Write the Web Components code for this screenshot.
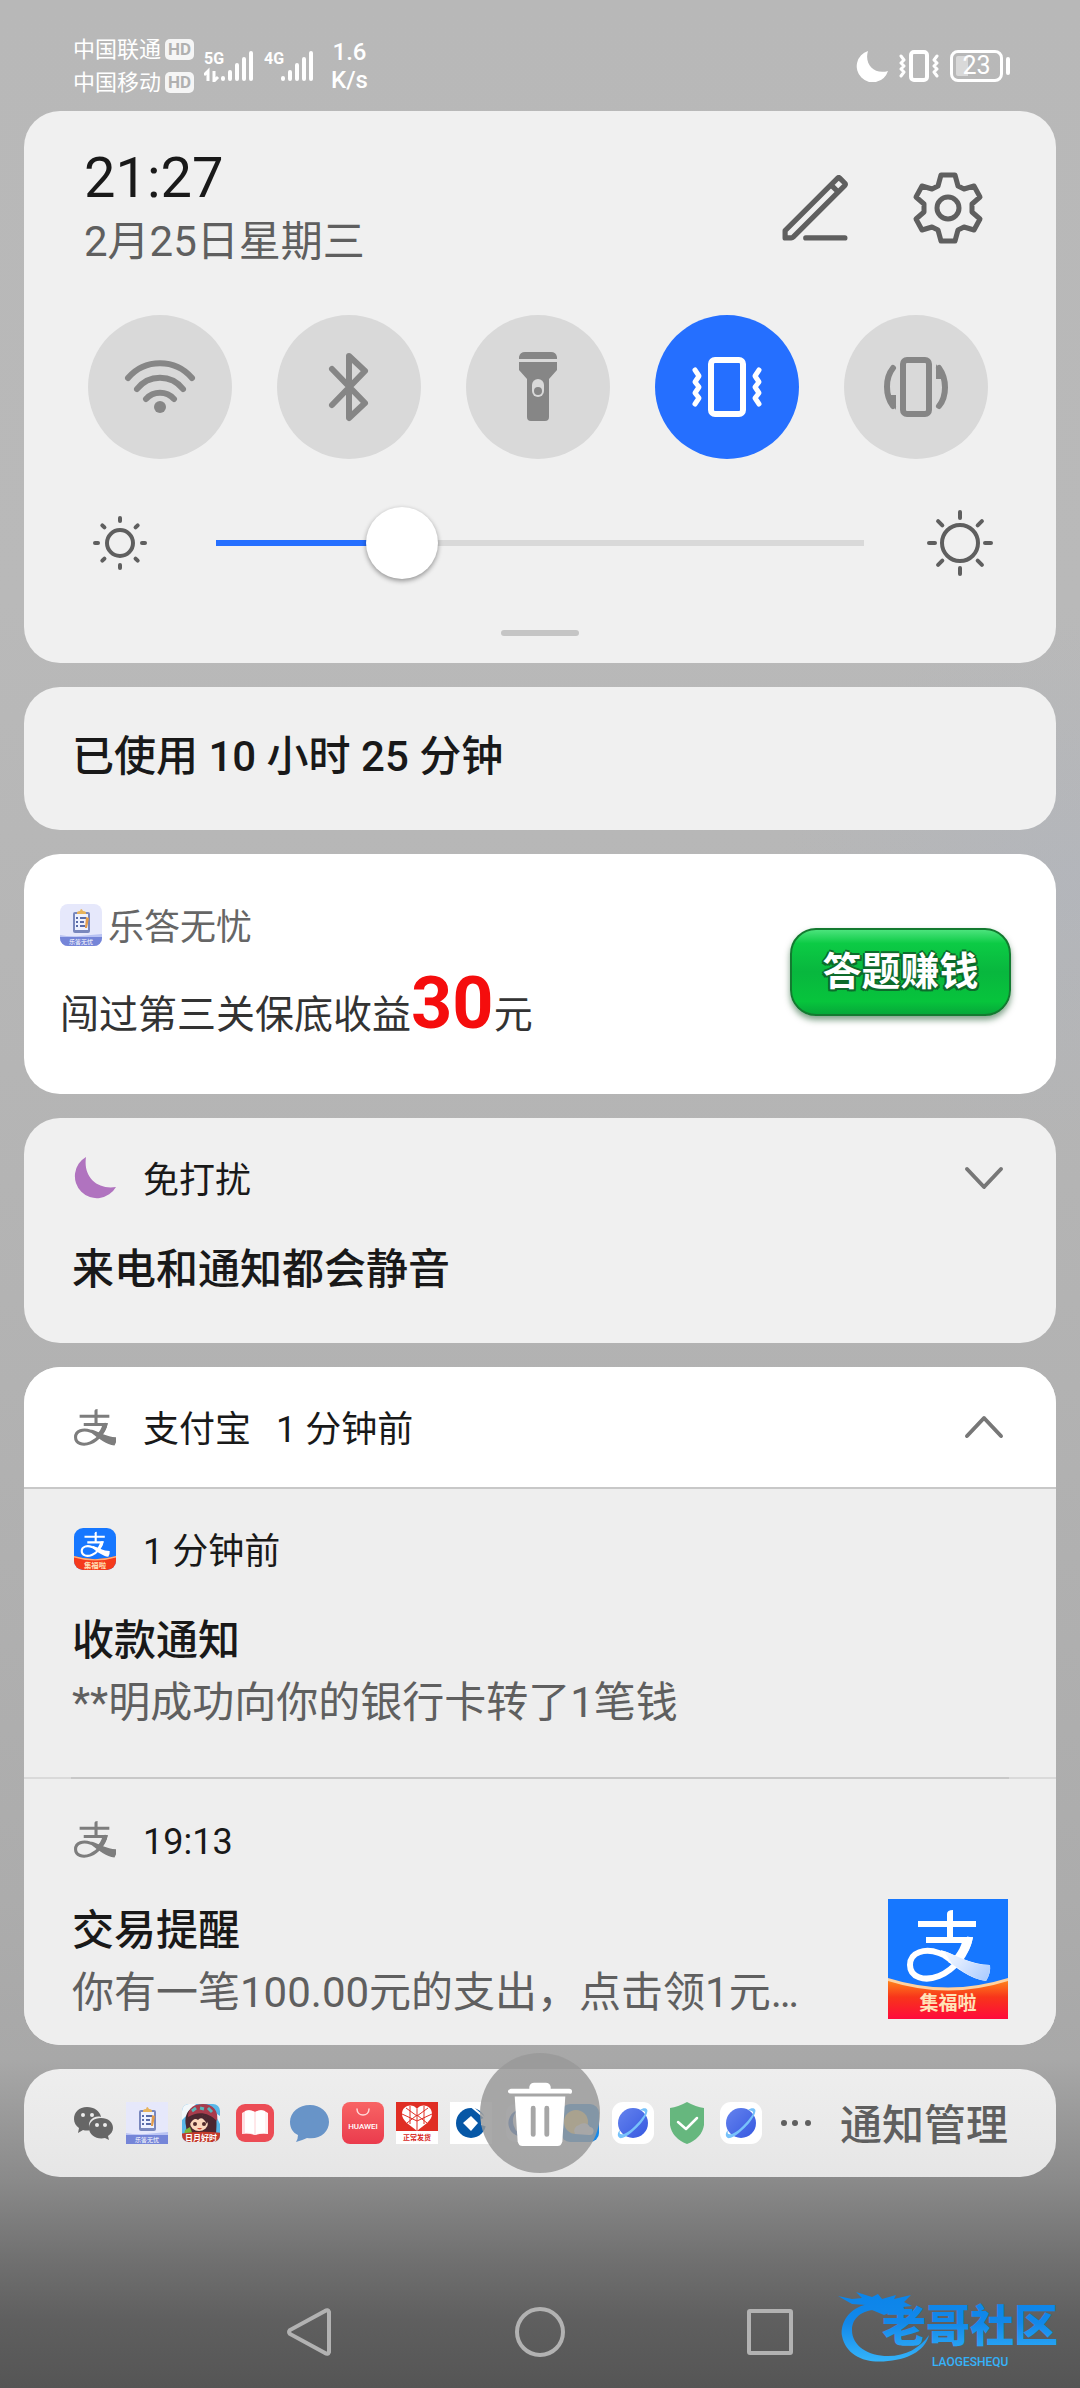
<!DOCTYPE html>
<html lang="zh-CN">
<head>
<meta charset="utf-8">
<meta name="viewport" content="width=device-width, initial-scale=1">
<title>通知中心</title>
<style>
  body {
    margin: 0;
    min-height: 100vh;
    font-family: Roboto, "Noto Sans CJK SC", sans-serif;
    color: #191919;
    background:
      radial-gradient(ellipse 300px 260px at 100% 880px, rgba(172, 180, 196, .3), transparent),
      linear-gradient(#b8b8b8 0, #b9b9b9 600px, #b3b3b3 1300px, #acacac 1900px, #a8a8a8 2060px, #8a8a8a 2180px, #707070 2260px, #5f5f5f 2320px, #555 2388px);
  }
</style>
</head>
<body>
<notice-shade>
  <status-bar slot="status"></status-bar>
  <control-panel></control-panel>

  <notice-card>
    <notice-title class="solo">已使用 10 小时 25 分钟</notice-title>
  </notice-card>

  <promo-card name="乐答无忧" action="答题赚钱">闯过第三关保底收益<b slot="amount">30</b><span slot="unit">元</span></promo-card>

  <notice-card>
    <notice-item icon="moon" name="免打扰" toggle="down" heading="来电和通知都会静音"></notice-item>
  </notice-card>

  <notice-card>
    <notice-head slot="head" icon="alipay" name="支付宝" time="1 分钟前" toggle="up"></notice-head>
    <notice-item icon="alipayApp" name="1 分钟前" heading="收款通知" body="**明成功向你的银行卡转了1笔钱"></notice-item>
    <notice-item class="next" icon="alipay" name="19:13" heading="交易提醒" body="你有一笔100.00元的支出，点击领1元…" picture="alipayBig"></notice-item>
  </notice-card>

  <notice-tray></notice-tray>
  <nav-bar slot="nav"></nav-bar>
</notice-shade>

<script>
// the ribbon mark, drawn in a 120 unit square
const alipayMark = (fill) => `
  <g fill="none" stroke="${fill}" stroke-linejoin="round">
    <path d="M30 25H88M38 41H80" stroke-width="6"/>
    <path d="M59 41V15q0-4 6-4V41" fill="${fill}" stroke="none"/>
    <path d="M82 38C79 55 66 71 51 77C36 83 22 78 22 66C22 53 37 49 51 54C65 59 80 70 100 71" stroke-width="6"/>
  </g>
  <path d="M85 38L75 39C73 49 68 57 60 63L67 67C77 59 83 50 85 38Z" fill="${fill}"/>
  <path d="M53 51C69 56 83 66 102 66Q103 74 98 82C82 80 69 69 55 59Z" fill="${fill}"/>`;

const waves = '<polyline points="-32,-17 -28,-11 -32,-5 -28,0 -32,6 -28,11 -32,17"/><polyline points="32,-17 28,-11 32,-5 28,0 32,6 28,11 32,17"/>';

const rays = (a, b) => [0, 45, 90, 135, 180, 225, 270, 315]
  .map(deg => `<path d="M0 ${a}V${b}" transform="rotate(${deg})"/>`).join('');

const browserArt = `
  <defs><linearGradient id="b" x2="1" y2="1"><stop stop-color="#6583ee"/><stop offset="1" stop-color="#3558e0"/></linearGradient></defs>
  <rect width="42" height="42" rx="11" fill="#fff"/>
  <circle cx="21" cy="21" r="15" fill="url(#b)"/>
  <path d="M8 28C4 32 6 37 10 36C18 34 33 19 35 11C37 6 32 5 28 8C35 9 34 11 30 16C24 24 17 30 12 32C8 33 7 32 8 28Z" fill="#78c2fa"/>`;

const clipboardArt = (radius) => `
  <defs><clipPath id="c"><rect width="42" height="42" rx="${radius}"/></clipPath></defs>
  <g clip-path="url(#c)">
    <rect width="42" height="42" fill="#e6e8fb"/>
    <path d="M0 31Q10 33 20 32T42 30V42H0Z" fill="#b9c3f3"/>
    <rect y="33" width="42" height="9" fill="#7585d8"/>
    <rect x="13" y="8" width="17" height="21" rx="2" fill="#7987bd"/>
    <rect x="15" y="10" width="13" height="16" fill="#eef1ff"/>
    <path d="M17 9q0-2 3-2q1-4 3 0q3 0 3 2v1h-9z" fill="#e7b35c"/>
    <path d="M16 14h2m2 0h6M16 18h2m2 0h4M16 22h2m2 0h5" stroke="#596ba8" stroke-width="2"/>
    <path d="M25 24L26 13l3 1-2 10z" fill="#e29b4b"/>
    <text x="21" y="40" font-size="6" fill="#fff" text-anchor="middle">乐答无忧</text>
  </g>`;

// name: [viewBox, markup]
const ART = {
  pencil: ['0 0 64 64', `<g fill="none" stroke="#5f5f5f" stroke-width="5" stroke-linecap="round" stroke-linejoin="round">
    <path d="M3 61V54L54 3Q55 2 56 3L61 8Q62 9 61 10L11 60Q10 61 9 61ZM48 10L54 16M23 61H61"/></g>`],
  gear: ['-36 -36 72 72', `<g fill="none" stroke="#5f5f5f" stroke-width="5" stroke-linejoin="round">
    <path d="M-7 -33H7L10 -22L16 -19L26 -22L32 -11L24 -4V4L32 11L26 22L16 19L10 22L7 33H-7L-10 22L-16 19L-26 22L-32 11L-24 4V-4L-32 -11L-26 -22L-16 -19L-10 -22Z"/>
    <circle r="11"/></g>`],
  wifi: ['-36 -36 72 72', `<g fill="none" stroke="currentColor" stroke-width="6" stroke-linecap="round">
    <path d="M-32 -9A42 42 0 0 1 32 -9M-23 2A29 29 0 0 1 23 2M-14 12A19 19 0 0 1 14 12"/></g><circle cy="20" r="6" fill="currentColor"/>`],
  bluetooth: ['-36 -36 72 72', `<path d="M-17 -18L16 16L0 31V-31L16 -16L-17 18" fill="none" stroke="currentColor" stroke-width="6" stroke-linecap="round" stroke-linejoin="round"/>`],
  torch: ['-36 -36 72 72', `<g fill="currentColor"><path d="M-19 -28V-30Q-18 -35 -13 -35H13Q18 -35 19 -30V-28ZM-19 -25H19V-17L11 -8V30Q11 34 7 34H-7Q-11 34 -11 30V-8L-19 -17Z"/></g>
    <rect x="-6" y="-8" width="12" height="18" rx="6" fill="#d9d9d9"/><circle cy="4" r="4" fill="currentColor"/>`],
  vibrate: ['-36 -36 72 72', `<g fill="none" stroke="currentColor" stroke-width="6" stroke-linecap="round" stroke-linejoin="round">
    <rect x="-16" y="-27" width="32" height="54" rx="4"/><g stroke-width="5">${waves}</g></g>`],
  rotate: ['-36 -36 72 72', `<g fill="none" stroke="currentColor" stroke-width="6" stroke-linecap="round">
    <rect x="-13" y="-27" width="26" height="54" rx="4"/><path d="M-23 -19C-31 -9 -31 8 -23 19M23 -19C31 -8 31 9 23 19"/></g>
    <path d="M-20 23V8H-28ZM20 -23V-8H28Z" fill="currentColor"/>`],
  sunSmall: ['-36 -36 72 72', `<g fill="none" stroke="#5f5f5f" stroke-width="4" stroke-linecap="round"><circle r="13"/>${rays(-22, -25)}</g>`],
  sunBig: ['-36 -36 72 72', `<g fill="none" stroke="#5f5f5f" stroke-width="4" stroke-linecap="round"><circle r="18"/>${rays(-25, -31)}</g>`],
  moon: ['0 0 42 42', '<path d="M12 0A22 22 0 1 0 42 30C23 33 9 20 12 0Z" fill="#b073bf"/>'],
  down: ['0 0 48 48', '<path d="M7 15L24 33L41 15" fill="none" stroke="#777" stroke-width="4" stroke-linecap="round" stroke-linejoin="round"/>'],
  up: ['0 0 48 48', '<path d="M7 33L24 15L41 33" fill="none" stroke="#777" stroke-width="4" stroke-linecap="round" stroke-linejoin="round"/>'],
  alipay: ['19 7 82 78', alipayMark('#7d7d7d')],
  alipayApp: ['0 0 120 120', `<defs><clipPath id="r"><rect width="120" height="120" rx="26"/></clipPath></defs><g clip-path="url(#r)">
    <rect width="120" height="120" fill="#1677ff"/>${alipayMark('#fff')}
    <path d="M0 80Q60 98 120 80V120H0Z" fill="#f53a1c"/><path d="M0 80Q60 98 120 80V84Q60 102 0 84Z" fill="#ffb27a"/>
    <text x="60" y="113" font-size="21" font-weight="700" fill="#ffe3b8" text-anchor="middle">集福啦</text></g>`],
  alipayBig: ['0 0 120 120', `<defs>
    <linearGradient id="s" x2="0" y2="1"><stop stop-color="#ff8a1c"/><stop offset=".45" stop-color="#f8351a"/><stop offset="1" stop-color="#ff0a3c"/></linearGradient>
    <linearGradient id="w" gradientUnits="userSpaceOnUse" x1="58" y1="40" x2="102" y2="80"><stop stop-color="#fff"/><stop offset=".45" stop-color="#dce9ff"/><stop offset="1" stop-color="#a8caff"/></linearGradient></defs>
    <rect width="120" height="120" fill="#1677ff"/>${alipayMark('#fff')}
    <path d="M56 52C72 58 84 66 102 66Q103 74 98 82C84 80 74 72 64 65Z" fill="url(#w)"/>
    <path d="M0 80Q60 98 120 80V120H0Z" fill="url(#s)"/><path d="M0 79Q60 98 120 79V82Q60 101 0 82Z" fill="#ffd2a0"/>
    <text x="60" y="111" font-size="19" font-weight="700" fill="#ffe3b8" text-anchor="middle">集福啦</text>`],
  clipboard: ['0 0 42 42', clipboardArt(8)],
  clipboardSquare: ['0 0 42 42', clipboardArt(0)],
  wechat: ['0 0 42 42', `<g fill="#666"><path d="M15 5C7 5 2 10 2 17C2 21 4 24 7 26L6 31L11 28Q15 29 18 28C14 19 22 13 29 15C28 9 22 5 15 5Z"/>
    <path d="M29 16C22 16 17 20 17 26C17 33 25 38 33 36L37 38L36 34C39 32 41 29 41 26C41 20 36 16 29 16Z"/></g>
    <g fill="#ededed"><circle cx="11" cy="13" r="2"/><circle cx="20" cy="13" r="2"/><circle cx="25" cy="23" r="2"/><circle cx="33" cy="23" r="2"/></g>`],
  game: ['0 0 42 42', `<defs><clipPath id="g"><rect x="2" y="2" width="38" height="38" rx="7"/></clipPath></defs><g clip-path="url(#g)">
    <rect width="42" height="42" fill="#58b7e8"/><path d="M2 2H16L8 12L2 18ZM34 10L40 14V22Z" fill="#f3f8fb"/>
    <path d="M6 24C3 8 14 3 23 3C35 3 38 12 36 32L7 33Z" fill="#4b2730"/>
    <path d="M8 15C8 5 15 2 23 2C33 2 39 9 37 19C28 10 18 9 8 15Z" fill="#a83b4c"/>
    <path d="M12 9L16 6M20 6L24 7M28 6L32 10" stroke="#59b8bd" stroke-width="3"/>
    <ellipse cx="19" cy="21" rx="9" ry="8" fill="#fbd8bd"/><path d="M9 18Q17 7 29 17L27 22Q22 13 18 18Q14 15 10 22Z" fill="#4b2730"/>
    <circle cx="15" cy="22" r="2" fill="#532c2c"/><circle cx="24" cy="22" r="2" fill="#532c2c"/>
    <path d="M17 26Q20 29 22 26" fill="#c84537"/><path d="M5 28L10 25L13 33H4Z" fill="#7ab63c"/>
    <path d="M0 32Q20 28 42 31V42H0Z" fill="#c23a2b"/><text x="21" y="39" font-size="8" font-weight="700" fill="#fff" text-anchor="middle">日月好时</text></g>`],
  book: ['0 0 42 42', `<rect x="2" y="2" width="38" height="38" rx="9" fill="#ec4c55"/>
    <path d="M8 11Q14 6 21 10V33Q14 31 8 32Z" fill="#ffdfe3"/><path d="M34 11Q28 6 21 10V33Q28 31 34 32Z" fill="#fff0f1"/>
    <path d="M11 9Q16 7 21 10V33Q16 30 11 31ZM31 9Q26 7 21 10V33Q26 30 31 31Z" fill="#fff"/><path d="M21 10V33" stroke="#ffd0d4"/>`],
  bubble: ['0 0 42 42', '<path d="M22 3C11 3 2 10 2 20C2 26 5 31 10 33Q10 37 8 40Q15 38 19 36C32 38 41 30 41 20C41 10 32 3 22 3Z" fill="#6894c8"/>'],
  huawei: ['0 0 42 42', `<defs><linearGradient id="h" x2="0" y2="1"><stop stop-color="#f86464"/><stop offset="1" stop-color="#ea3b4d"/></linearGradient></defs>
    <rect width="42" height="42" rx="8" fill="url(#h)"/><path d="M15 7C15 15 27 15 27 7" fill="none" stroke="#ffd9d9" stroke-width="1.5" stroke-linecap="round"/>
    <text x="21" y="27" font-size="8" font-weight="500" fill="#fff" text-anchor="middle">HUAWEI</text>`],
  heart: ['0 0 42 42', `<rect width="42" height="42" fill="#fff"/><rect width="42" height="29" fill="#e02e24"/>
    <path d="M21 7C17 1 6 3 6 12C6 19 14 23 21 29C28 23 36 19 36 12C36 3 25 1 21 7Z" fill="#fff"/>
    <path d="M21 7V29M6 12L21 19L36 12M10 6L21 14L32 6M11 21L21 13L31 21M14 4V22M28 4V22" stroke="#e02e24" fill="none"/>
    <text x="21" y="38" font-size="7" font-weight="700" fill="#d8281e" text-anchor="middle">正常发货</text>`],
  bank: ['0 0 42 42', `<rect width="42" height="42" fill="#fff"/><circle cx="21" cy="21" r="15" fill="#0657a6"/>
    <path d="M21 14L28 21L21 29L13 21Z" fill="#fff"/><path d="M22 5L35 16" stroke="#fff" stroke-width="2"/><path d="M31 17L42 13V26L31 23Z" fill="#fff"/>`],
  cloud: ['0 0 42 42', '<rect x="2" y="2" width="38" height="38" rx="9" fill="#f4f6fa"/><path d="M14 8A13 13 0 1 0 22 34A15 15 0 0 1 14 8Z" fill="#1d5fc4"/><circle cx="23" cy="20" r="9" fill="#3e76c9"/>'],
  weather: ['0 0 42 42', '<rect x="3" y="2" width="38" height="38" rx="9" fill="#1688e8"/><circle cx="18" cy="20" r="12" fill="#ffd05c"/><path d="M17 32A6 6 0 0 1 21 23A7 7 0 0 1 32 25A4 4 0 0 1 31 33Z" fill="#f2f2f2"/>'],
  browser: ['0 0 42 42', browserArt],
  shield: ['0 0 42 42', '<path d="M21 0Q30 5 38 6V23Q36 36 21 42Q6 36 4 23V6Q12 5 21 0Z" fill="#66b77e"/><path d="M12 20L20 27L31 16" fill="none" stroke="#fff" stroke-width="2.5" stroke-linecap="round" stroke-linejoin="round"/>'],
  dots: ['0 0 42 42', '<g fill="#5f5f5f"><circle cx="10" cy="21" r="3"/><circle cx="21" cy="21" r="3"/><circle cx="34" cy="21" r="3"/></g>'],
  trash: ['0 0 72 72', `<g fill="#fff"><path d="M25 9Q26 5 30 5H42Q46 5 47 9V11H66Q69 11 69 14T66 16H6Q3 16 3 14T6 11H25Z"/><path d="M10 19H62L59 65Q58 70 54 70H18Q14 70 13 65Z"/></g>
    <path d="M29 31V58M43 31V58" stroke="#a6a6a6" stroke-width="5" stroke-linecap="round"/>`],
  back: ['0 0 50 50', '<path d="M44 5V45Q43 48 40 46L5 27Q3 25 5 23L40 4Q43 2 44 5Z" fill="none" stroke="#b2b2b2" stroke-width="4"/>'],
  home: ['0 0 50 50', '<circle cx="25" cy="25" r="23" fill="none" stroke="#b2b2b2" stroke-width="4"/>'],
  recent: ['0 0 50 50', '<rect x="4" y="4" width="42" height="42" rx="1" fill="none" stroke="#b2b2b2" stroke-width="4"/>'],
  statusMoon: ['0 0 32 32', '<path d="M12 1A16 16 0 1 0 32 21C18 25 8 14 12 1Z" fill="#fff"/>'],
  statusVibrate: ['-20 -16 40 32', '<g fill="none" stroke="#fff" stroke-width="3" stroke-linecap="round" stroke-linejoin="round"><rect x="-8" y="-14" width="16" height="28" rx="3" stroke-width="4"/><path d="M-18 -10L-15 -6L-18 -3L-15 0L-18 3L-15 6L-18 10M18 -10L15 -6L18 -3L15 0L18 3L15 6L18 10"/></g>'],
};

class AppIcon extends HTMLElement {
  constructor() {
    super();
    this.attachShadow({mode: 'open'});
  }

  connectedCallback() {
    const [box, markup] = ART[this.getAttribute('name')];
    this.shadowRoot.innerHTML = `
      <style>
        :host { display: block; width: 42px; height: 42px; flex: none; }
        svg { display: block; width: 100%; height: 100%; }
      </style>
      <svg viewBox="${box}" aria-hidden="true">${markup}</svg>`;
  }
}

class SignalBars extends HTMLElement {
  constructor() {
    super();
    this.attachShadow({mode: 'open'});
  }

  connectedCallback() {
    const arrows = this.hasAttribute('busy')
      ? '<path d="M4 31V21L0 25M10 21V31L14 27" fill="none" stroke="#fff" stroke-width="3"/>' : '';
    this.shadowRoot.innerHTML = `
      <style>
        :host { display: block; }
        svg { display: block; }
      </style>
      <svg width="50" height="32" viewBox="0 0 50 32">
        <text x="0" y="14" font-size="16" font-weight="700" fill="#fff">${this.getAttribute('kind')}</text>
        ${arrows}
        <path d="M19 28V29M26 22V29M33 15V29M40 9V29M47 3V29" stroke="#fff" stroke-width="4" stroke-linecap="round"/>
      </svg>`;
  }
}

class StatusBar extends HTMLElement {
  constructor() {
    super();
    this.attachShadow({mode: 'open'});
    this.shadowRoot.innerHTML = `
      <style>
        :host {
          display: flex;
          align-items: center;
          box-sizing: border-box;
          height: 111px;
          padding: 20px 70px 0 73px;
          color: #fff;
        }
        .carriers { font-size: 22px; line-height: 33px; }
        .carriers div { display: flex; align-items: center; gap: 4px; }
        .hd {
          padding: 0 3px;
          border-radius: 5px;
          background: #f5f5f5;
          color: #b0b0b0;
          font-size: 17px;
          font-weight: 700;
          line-height: 21px;
        }
        signal-bars { margin-left: 10px; }
        .speed { margin-left: 17px; font-size: 24px; font-weight: 500; line-height: 28px; text-align: center; }
        .right { margin-left: auto; display: flex; align-items: center; gap: 11px; }
        .right app-icon { width: 32px; height: 32px; }
        .right .wide { width: 40px; }
        .battery { display: flex; align-items: center; gap: 3px; }
        .battery span {
          box-sizing: border-box;
          width: 53px;
          height: 32px;
          border: 3px solid #fff;
          border-radius: 8px;
          background: linear-gradient(90deg, #d9d9d9 30%, transparent 30%) content-box;
          padding: 3px;
          font-size: 25px;
          line-height: 20px;
          text-align: center;
        }
        .battery i { width: 4px; height: 18px; border-radius: 2px; background: #fff; }
      </style>
      <div class="carriers">
        <div>中国联通<span class="hd">HD</span></div>
        <div>中国移动<span class="hd">HD</span></div>
      </div>
      <signal-bars kind="5G" busy></signal-bars>
      <signal-bars kind="4G"></signal-bars>
      <div class="speed">1.6<br>K/s</div>
      <div class="right">
        <app-icon name="statusMoon"></app-icon>
        <app-icon class="wide" name="statusVibrate"></app-icon>
        <div class="battery"><span>23</span><i></i></div>
      </div>`;
  }
}

class QuickTile extends HTMLElement {
  constructor() {
    super();
    this.attachShadow({mode: 'open'});
  }

  connectedCallback() {
    const on = this.hasAttribute('on');
    this.shadowRoot.innerHTML = `
      <style>
        :host { display: block; }
        button {
          display: grid;
          place-items: center;
          width: 144px;
          height: 144px;
          padding: 0;
          border: 0;
          border-radius: 50%;
          background: #d9d9d9;
          color: #868686;
        }
        button[aria-pressed="true"] { background: #256fff; color: #fff; }
        app-icon { width: 72px; height: 72px; }
      </style>
      <button type="button" aria-pressed="${on}" aria-label="${this.getAttribute('label')}">
        <app-icon name="${this.getAttribute('icon')}"></app-icon>
      </button>`;
    this.shadowRoot.querySelector('button').addEventListener('click', this._toggle);
  }

  _toggle() {
    this.setAttribute('aria-pressed', this.getAttribute('aria-pressed') !== 'true');
  }
}

class BrightnessSlider extends HTMLElement {
  constructor() {
    super();
    this.attachShadow({mode: 'open'});
    this.shadowRoot.innerHTML = `
      <style>
        :host { display: flex; align-items: center; }
        app-icon { width: 72px; height: 72px; }
        input {
          --fill: 29%;
          -webkit-appearance: none;
          appearance: none;
          flex: 1;
          min-width: 0;
          height: 72px;
          margin: 0 60px;
          background: linear-gradient(90deg, #256fff var(--fill), #d9d9d9 var(--fill)) center / 100% 6px no-repeat;
        }
        input::-webkit-slider-thumb {
          -webkit-appearance: none;
          width: 72px;
          height: 72px;
          border-radius: 50%;
          background: #fff;
          box-shadow: 0 2px 5px rgba(0, 0, 0, .4);
        }
      </style>
      <app-icon name="sunSmall"></app-icon>
      <input type="range" min="0" max="100" value="26" aria-label="亮度">
      <app-icon name="sunBig"></app-icon>`;
    const input = this.shadowRoot.querySelector('input');
    input.addEventListener('input', () => input.style.setProperty('--fill', input.value + '%'));
  }
}

class ControlPanel extends HTMLElement {
  constructor() {
    super();
    this.attachShadow({mode: 'open'});
    this.shadowRoot.innerHTML = `
      <style>
        :host {
          display: block;
          padding: 33px 0 27px;
          border-radius: 36px;
          background: #f0f0f0;
        }
        header { display: flex; align-items: center; gap: 61px; padding: 0 72px 0 60px; }
        .when { flex: 1; }
        time { display: block; font-size: 56px; line-height: 68px; }
        .date { color: #5f5f5f; font-size: 42px; line-height: 60px; }
        header button { display: grid; place-items: center; width: 72px; height: 72px; padding: 0; border: 0; background: none; }
        header app-icon { width: 66px; height: 66px; }
        header .gear { width: 72px; height: 72px; }
        .tiles { display: flex; justify-content: space-between; padding: 43px 68px 48px 64px; }
        brightness-slider { padding: 0 60px; }
        .grip { width: 78px; height: 6px; margin: 51px auto 0; border-radius: 3px; background: #c5c5c5; }
      </style>
      <header>
        <div class="when">
          <time>21:27</time>
          <div class="date">2月25日星期三</div>
        </div>
        <button type="button" aria-label="编辑"><app-icon name="pencil"></app-icon></button>
        <button type="button" aria-label="设置"><app-icon class="gear" name="gear"></app-icon></button>
      </header>
      <div class="tiles">
        <quick-tile icon="wifi" label="WLAN"></quick-tile>
        <quick-tile icon="bluetooth" label="蓝牙"></quick-tile>
        <quick-tile icon="torch" label="手电筒"></quick-tile>
        <quick-tile icon="vibrate" label="振动" on></quick-tile>
        <quick-tile icon="rotate" label="自动旋转"></quick-tile>
      </div>
      <brightness-slider></brightness-slider>
      <div class="grip"></div>`;
  }
}

class NoticeCard extends HTMLElement {
  constructor() {
    super();
    this.attachShadow({mode: 'open'});
    this.shadowRoot.innerHTML = `
      <style>
        :host { display: block; overflow: hidden; border-radius: 36px; background: #f0f0f0; }
      </style>
      <slot name="head"></slot>
      <slot></slot>`;
  }
}

class NoticeTitle extends HTMLElement {
  constructor() {
    super();
    this.attachShadow({mode: 'open'});
    this.shadowRoot.innerHTML = `
      <style>
        :host { display: block; font-size: 42px; font-weight: 500; line-height: 64px; }
        :host(.solo) { padding: 38px 48px 41px; }
      </style>
      <slot></slot>`;
  }
}

// icon, app name, time and the fold button
class NoticeHead extends HTMLElement {
  constructor() {
    super();
    this.attachShadow({mode: 'open'});
  }

  connectedCallback() {
    const time = this.getAttribute('time');
    const toggle = this.getAttribute('toggle');
    this.shadowRoot.innerHTML = `
      <style>
        :host { display: flex; align-items: center; height: 48px; font-size: 36px; line-height: 48px; }
        :host([slot="head"]) { padding: 36px 48px; border-bottom: 2px solid #c8c8c8; background: #fff; }
        app-icon { margin: 0 27px 0 2px; }
        span { padding-top: 6px; }
        .time { margin-left: 25px; }
        button { width: 48px; height: 48px; margin-left: auto; padding: 0; border: 0; background: none; }
        button app-icon { width: 48px; height: 48px; margin: 0; }
      </style>
      <app-icon name="${this.getAttribute('icon')}"></app-icon>
      <span>${this.getAttribute('name')}</span>
      ${time ? `<span class="time">${time}</span>` : ''}
      ${toggle ? `<button type="button" aria-label="${toggle === 'up' ? '收起' : '展开'}"><app-icon name="${toggle}"></app-icon></button>` : ''}`;
  }
}

class NoticeItem extends HTMLElement {
  constructor() {
    super();
    this.attachShadow({mode: 'open'});
  }

  connectedCallback() {
    const body = this.getAttribute('body');
    const toggle = this.getAttribute('toggle');
    const picture = this.getAttribute('picture');
    this.shadowRoot.innerHTML = `
      <style>
        :host { display: block; padding: 36px 48px 41px; }
        :host([body]) { padding-bottom: 44px; background: #eee; }
        :host(.next) {
          padding-bottom: 22px;
          border-top: 2px solid;
          border-image: linear-gradient(90deg, #dadada 48px, #c8c8c8 48px, #c8c8c8 calc(100% - 48px), #dadada calc(100% - 48px)) 1;
        }
        .row { display: flex; gap: 36px; margin-top: 36px; }
        .text { flex: 1; min-width: 0; }
        p { margin: 0; color: #5f5f5f; font-size: 42px; line-height: 60px; }
        .row app-icon { width: 120px; height: 120px; }
      </style>
      <notice-head icon="${this.getAttribute('icon')}" name="${this.getAttribute('name')}" ${toggle ? `toggle="${toggle}"` : ''}></notice-head>
      <div class="row">
        <div class="text">
          <notice-title>${this.getAttribute('heading')}</notice-title>
          ${body ? `<p>${body}</p>` : ''}
        </div>
        ${picture ? `<app-icon name="${picture}"></app-icon>` : ''}
      </div>`;
  }
}

class PromoCard extends HTMLElement {
  constructor() {
    super();
    this.attachShadow({mode: 'open'});
  }

  connectedCallback() {
    this.shadowRoot.innerHTML = `
      <style>
        :host {
          display: flex;
          align-items: center;
          justify-content: space-between;
          padding: 50px 45px 49px 36px;
          border-radius: 36px;
          background: #fff;
        }
        .name { display: flex; align-items: center; gap: 6px; height: 42px; color: #666; font-size: 36px; line-height: 42px; }
        .name span { padding-top: 6px; }
        .offer { margin-top: 22px; color: #333; font-size: 39px; line-height: 60px; }
        ::slotted(b) { color: #f50d0d; font-size: 72px; line-height: 72px; }
        button {
          width: 221px;
          height: 88px;
          margin-bottom: 6px;
          padding: 0;
          border: 2px solid #137a30;
          border-radius: 26px;
          background: linear-gradient(#4be37c 0, #0ccb45 16%, #08b73e 50%, #07c43c 85%, #06a839 100%);
          box-shadow: 0 4px 6px rgba(0, 70, 20, .5);
          color: #fff;
          font: 700 39px/60px Roboto, "Noto Sans CJK SC", sans-serif;
          text-shadow: 2px 0 #0d6b2b, -2px 0 #0d6b2b, 0 2px #0d6b2b, 0 -2px #0d6b2b, 2px 2px #0d6b2b, -2px 2px #0d6b2b;
        }
      </style>
      <div>
        <div class="name"><app-icon name="clipboard"></app-icon><span>${this.getAttribute('name')}</span></div>
        <div class="offer"><slot></slot><slot name="amount"></slot><slot name="unit"></slot></div>
      </div>
      <button type="button">${this.getAttribute('action')}</button>`;
  }
}

class NoticeTray extends HTMLElement {
  constructor() {
    super();
    this.attachShadow({mode: 'open'});
    const names = ['wechat', 'clipboardSquare', 'game', 'book', 'bubble', 'huawei', 'heart', 'bank', 'cloud', 'weather', 'browser', 'shield', 'browser', 'dots'];
    this.shadowRoot.innerHTML = `
      <style>
        :host {
          position: relative;
          display: flex;
          align-items: center;
          justify-content: space-between;
          height: 108px;
          padding: 0 48px;
          border-radius: 36px;
          background: linear-gradient(#eee, #e6e6e6);
        }
        .apps { display: flex; gap: 12px; }
        a { padding-top: 6px; color: #5f5f5f; font-size: 42px; font-weight: 500; line-height: 60px; text-decoration: none; }
        /* floats over the strip of icons */
        button {
          position: absolute;
          top: -16px;
          left: 50%;
          display: grid;
          place-items: center;
          width: 120px;
          height: 120px;
          margin-left: -60px;
          padding: 0;
          border: 0;
          border-radius: 50%;
          background: rgba(152, 152, 152, .84);
        }
        button app-icon { width: 70px; height: 70px; }
      </style>
      <div class="apps">${names.map(name => `<app-icon name="${name}"></app-icon>`).join('')}</div>
      <a href="#manage">通知管理</a>
      <button type="button" aria-label="清除全部"><app-icon name="trash"></app-icon></button>`;
  }
}

class SiteMark extends HTMLElement {
  constructor() {
    super();
    this.attachShadow({mode: 'open'});
    this.shadowRoot.innerHTML = `
      <style>
        :host { display: block; width: 230px; height: 80px; }
        svg { display: block; }
      </style>
      <svg width="230" height="80" viewBox="0 0 230 80">
        <defs><linearGradient id="m" gradientUnits="userSpaceOnUse" x1="0" y1="0" x2="0" y2="72">
          <stop stop-color="#0a84ea"/><stop offset=".45" stop-color="#1288ea"/><stop offset="1" stop-color="#35b4fa"/></linearGradient></defs>
        <g fill="url(#m)">
          <path d="M30 14C10 18 2 34 4 46C8 66 28 74 50 71C74 69 88 58 91 45C82 58 68 66 50 66C30 66 14 56 14 40C14 28 24 20 38 20Z"/>
          <path d="M0 6L14 9L24 8L18 2L34 7L40 4L44 9L58 5L56 9L73 5L66 12L74 16L64 17L70 22L56 21L46 25L34 20L20 20L28 15L14 14Z"/>
          <text x="44" y="52" font-size="44" font-weight="900">老哥社区</text>
          <text x="94" y="76" font-size="12" font-weight="500">LAOGESHEQU</text>
        </g>
      </svg>`;
  }
}

class NavBar extends HTMLElement {
  constructor() {
    super();
    this.attachShadow({mode: 'open'});
    this.shadowRoot.innerHTML = `
      <style>
        :host { position: relative; display: block; padding: 130px 0 31px; }
        nav { display: grid; grid-template-columns: repeat(3, 230px); justify-content: center; justify-items: center; }
        button { padding: 0; border: 0; background: none; }
        app-icon { width: 50px; height: 50px; }
        /* stamp lying over the corner of the bar */
        site-mark { position: absolute; right: 12px; bottom: 18px; }
      </style>
      <nav>
        <button type="button" aria-label="返回"><app-icon name="back"></app-icon></button>
        <button type="button" aria-label="主页"><app-icon name="home"></app-icon></button>
        <button type="button" aria-label="最近任务"><app-icon name="recent"></app-icon></button>
      </nav>
      <site-mark></site-mark>`;
  }
}

class NoticeShade extends HTMLElement {
  constructor() {
    super();
    this.attachShadow({mode: 'open'});
    this.shadowRoot.innerHTML = `
      <style>
        :host { display: block; }
        main { display: flex; flex-direction: column; gap: 24px; padding: 0 24px; }
      </style>
      <slot name="status"></slot>
      <main><slot></slot></main>
      <slot name="nav"></slot>`;
  }
}

customElements.define('app-icon', AppIcon);
customElements.define('signal-bars', SignalBars);
customElements.define('status-bar', StatusBar);
customElements.define('quick-tile', QuickTile);
customElements.define('brightness-slider', BrightnessSlider);
customElements.define('control-panel', ControlPanel);
customElements.define('notice-card', NoticeCard);
customElements.define('notice-title', NoticeTitle);
customElements.define('notice-head', NoticeHead);
customElements.define('notice-item', NoticeItem);
customElements.define('promo-card', PromoCard);
customElements.define('notice-tray', NoticeTray);
customElements.define('site-mark', SiteMark);
customElements.define('nav-bar', NavBar);
customElements.define('notice-shade', NoticeShade);
</script>
</body>
</html>
